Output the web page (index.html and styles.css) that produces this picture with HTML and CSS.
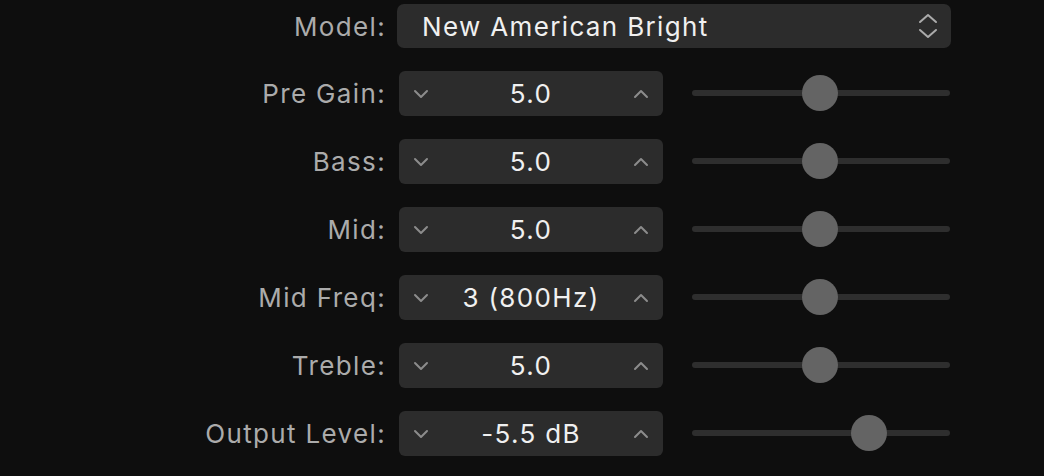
FILE: index.html
```html
<!DOCTYPE html>
<html>
<head>
<meta charset="utf-8">
<link rel="stylesheet" href="styles.css">
</head>
<body>
<div class="panel">
  <div class="label">Model:</div>
  <div class="popup">
    <span class="popup-text">New American Bright</span>
    <svg class="popup-arrows" width="20" height="28" viewBox="0 0 20 28"><path d="M2 10 L10 3 L18 10 M2 18 L10 25 L18 18" fill="none" stroke="#ababab" stroke-width="2" stroke-linecap="round" stroke-linejoin="round"/></svg>
  </div>

  <div class="label">Pre Gain:</div>
  <div class="stepper">
    <svg class="chev" width="16" height="10" viewBox="0 0 16 10"><path d="M2 2 L8 8 L14 2" fill="none" stroke="#8c8c8c" stroke-width="2" stroke-linecap="round" stroke-linejoin="round"/></svg>
    <span class="value">5.0</span>
    <svg class="chev" width="16" height="10" viewBox="0 0 16 10"><path d="M2 8 L8 2 L14 8" fill="none" stroke="#8c8c8c" stroke-width="2" stroke-linecap="round" stroke-linejoin="round"/></svg>
  </div>
  <div class="slider"><div class="track"></div><div class="knob" style="left:128px"></div></div>

  <div class="label">Bass:</div>
  <div class="stepper">
    <svg class="chev" width="16" height="10" viewBox="0 0 16 10"><path d="M2 2 L8 8 L14 2" fill="none" stroke="#8c8c8c" stroke-width="2" stroke-linecap="round" stroke-linejoin="round"/></svg>
    <span class="value">5.0</span>
    <svg class="chev" width="16" height="10" viewBox="0 0 16 10"><path d="M2 8 L8 2 L14 8" fill="none" stroke="#8c8c8c" stroke-width="2" stroke-linecap="round" stroke-linejoin="round"/></svg>
  </div>
  <div class="slider"><div class="track"></div><div class="knob" style="left:128px"></div></div>

  <div class="label">Mid:</div>
  <div class="stepper">
    <svg class="chev" width="16" height="10" viewBox="0 0 16 10"><path d="M2 2 L8 8 L14 2" fill="none" stroke="#8c8c8c" stroke-width="2" stroke-linecap="round" stroke-linejoin="round"/></svg>
    <span class="value">5.0</span>
    <svg class="chev" width="16" height="10" viewBox="0 0 16 10"><path d="M2 8 L8 2 L14 8" fill="none" stroke="#8c8c8c" stroke-width="2" stroke-linecap="round" stroke-linejoin="round"/></svg>
  </div>
  <div class="slider"><div class="track"></div><div class="knob" style="left:128px"></div></div>

  <div class="label">Mid Freq:</div>
  <div class="stepper">
    <svg class="chev" width="16" height="10" viewBox="0 0 16 10"><path d="M2 2 L8 8 L14 2" fill="none" stroke="#8c8c8c" stroke-width="2" stroke-linecap="round" stroke-linejoin="round"/></svg>
    <span class="value">3 (800Hz)</span>
    <svg class="chev" width="16" height="10" viewBox="0 0 16 10"><path d="M2 8 L8 2 L14 8" fill="none" stroke="#8c8c8c" stroke-width="2" stroke-linecap="round" stroke-linejoin="round"/></svg>
  </div>
  <div class="slider"><div class="track"></div><div class="knob" style="left:128px"></div></div>

  <div class="label">Treble:</div>
  <div class="stepper">
    <svg class="chev" width="16" height="10" viewBox="0 0 16 10"><path d="M2 2 L8 8 L14 2" fill="none" stroke="#8c8c8c" stroke-width="2" stroke-linecap="round" stroke-linejoin="round"/></svg>
    <span class="value">5.0</span>
    <svg class="chev" width="16" height="10" viewBox="0 0 16 10"><path d="M2 8 L8 2 L14 8" fill="none" stroke="#8c8c8c" stroke-width="2" stroke-linecap="round" stroke-linejoin="round"/></svg>
  </div>
  <div class="slider"><div class="track"></div><div class="knob" style="left:128px"></div></div>

  <div class="label">Output Level:</div>
  <div class="stepper">
    <svg class="chev" width="16" height="10" viewBox="0 0 16 10"><path d="M2 2 L8 8 L14 2" fill="none" stroke="#8c8c8c" stroke-width="2" stroke-linecap="round" stroke-linejoin="round"/></svg>
    <span class="value">-5.5 dB</span>
    <svg class="chev" width="16" height="10" viewBox="0 0 16 10"><path d="M2 8 L8 2 L14 8" fill="none" stroke="#8c8c8c" stroke-width="2" stroke-linecap="round" stroke-linejoin="round"/></svg>
  </div>
  <div class="slider"><div class="track"></div><div class="knob" style="left:177px"></div></div>
</div>
</body>
</html>
```
FILE: styles.css
```css
html, body {
  margin: 0;
  padding: 0;
  background: #0e0e0e;
  width: 1044px;
  height: 476px;
  overflow: hidden;
}
body {
  font-family: "Inter", "Liberation Sans", sans-serif;
  font-size: 26px;
  letter-spacing: 1.35px;
}
.panel {
  display: grid;
  grid-template-columns: 385px 264px 258px;
  grid-template-rows: 44px repeat(6, 45px);
  row-gap: 23px;
  padding-top: 4px;
}
.label {
  color: #ababab;
  display: flex;
  align-items: center;
  justify-content: flex-end;
  margin-right: -1px;
}
.popup {
  grid-column: 2 / 4;
  margin-left: 12px;
  width: 554px;
  box-sizing: border-box;
  background: #2c2c2c;
  border-radius: 7px;
  display: flex;
  align-items: center;
  justify-content: space-between;
  padding: 0 13px 0 25px;
  color: #f0f0f0;
}
.popup-arrows { display: block; }
.stepper {
  margin-left: 14px;
  width: 264px;
  box-sizing: border-box;
  background: #2c2c2c;
  border-radius: 6px;
  display: flex;
  align-items: center;
  justify-content: space-between;
  padding: 0 14px;
  color: #f0f0f0;
}
.chev { display: block; }
.value {
  flex: 1;
  text-align: center;
}
.slider {
  position: relative;
  margin-left: 43px;
  width: 258px;
}
.track {
  position: absolute;
  left: 0;
  right: 0;
  top: 19px;
  height: 6px;
  border-radius: 3px;
  background: #2e2e2e;
}
.knob {
  position: absolute;
  top: 4px;
  width: 36px;
  height: 36px;
  margin-left: -18px;
  border-radius: 50%;
  background: #646464;
}
```
